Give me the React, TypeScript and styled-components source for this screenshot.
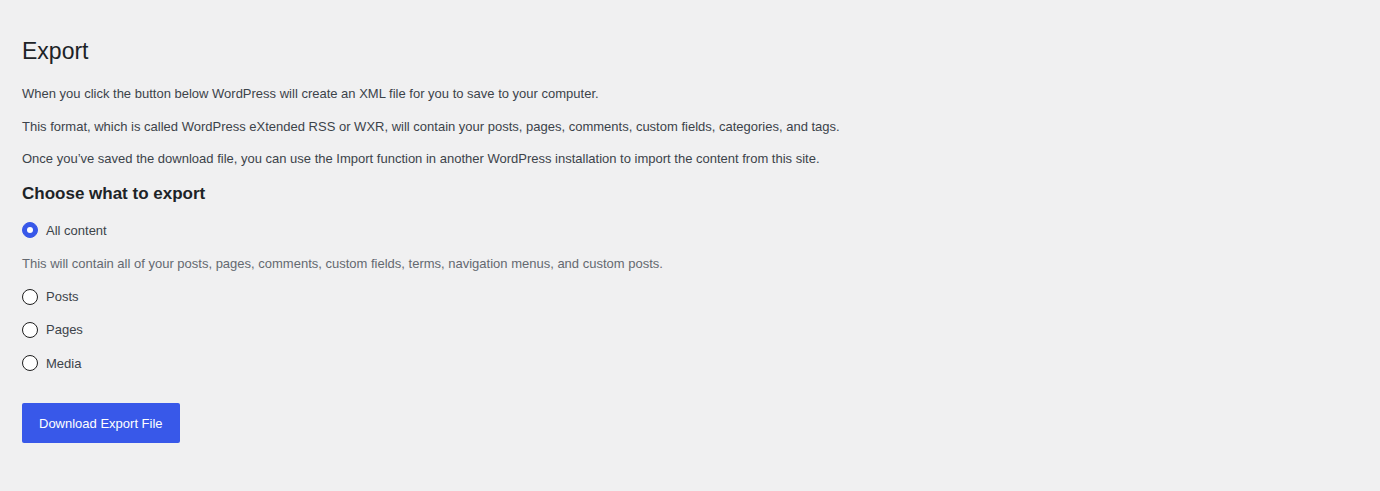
import React, {ReactElement, useState} from 'react'
import styled, {createGlobalStyle} from 'styled-components'

const GlobalStyle = createGlobalStyle`
    html, body {
        margin: 0;
        padding: 0;
        background: #f0f0f1;
    }

    body {
        font-family: 'Liberation Sans', Arial, sans-serif;
        font-size: 13px;
        line-height: 1.5;
        color: #3c434a;
    }
`

const Wrap = styled.div`
    padding: 36px 22px 40px;
    min-height: 100vh;
    box-sizing: border-box;
`

const Title = styled.h1`
    margin: 0 0 18px;
    font-size: 23px;
    font-weight: 400;
    line-height: 30px;
    color: #1d2327;
`

const Text = styled.p`
    margin: 0 0 13px;
    line-height: 19.5px;
`

const SubTitle = styled.h2`
    margin: 14px 0 16px;
    font-size: 17px;
    font-weight: 600;
    line-height: 22px;
    color: #1d2327;
`

const Options = styled.fieldset`
    border: 0;
    margin: 0;
    padding: 0;
    display: flex;
    flex-direction: column;
    gap: 13.75px;
`

const Option = styled.label`
    display: flex;
    align-items: center;
    gap: 8px;
    line-height: 19.5px;
    cursor: pointer;
`

const Radio = styled.input`
    appearance: none;
    margin: 0;
    width: 16px;
    height: 16px;
    border-radius: 50%;
    border: 1px solid #1e1e1e;
    background: #fff;
    box-sizing: border-box;
    display: grid;
    place-items: center;
    flex: none;

    &:checked {
        border-color: #3858e9;
        background: #3858e9;

        &::before {
            content: '';
            width: 6px;
            height: 6px;
            border-radius: 50%;
            background: #fff;
        }
    }
`

const Description = styled.p`
    margin: 0;
    line-height: 19.5px;
    color: #646970;
`

const Button = styled.button`
    margin-top: 30px;
    height: 40px;
    padding: 0 17px;
    border: 0;
    border-radius: 2px;
    background: #3858e9;
    color: #fff;
    font-family: inherit;
    font-size: 13px;
    cursor: pointer;
`

const choices = [
    {id: 'all', label: 'All content'},
    {id: 'posts', label: 'Posts'},
    {id: 'pages', label: 'Pages'},
    {id: 'attachment', label: 'Media'},
]

export default function App(): ReactElement {
    const [selected, setSelected] = useState('all')

    return (
        <Wrap>
            <GlobalStyle/>
            <Title>Export</Title>
            <Text>When you click the button below WordPress will create an XML file for you to save to your computer.</Text>
            <Text>This format, which is called WordPress eXtended RSS or WXR, will contain your posts, pages, comments, custom fields, categories, and tags.</Text>
            <Text>Once you’ve saved the download file, you can use the Import function in another WordPress installation to import the content from this site.</Text>

            <SubTitle>Choose what to export</SubTitle>
            <Options>
                {choices.map(choice => (
                    <React.Fragment key={choice.id}>
                        <Option>
                            <Radio
                                type="radio"
                                name="content"
                                checked={selected === choice.id}
                                onChange={() => setSelected(choice.id)}
                            />
                            {choice.label}
                        </Option>
                        {choice.id === 'all' && (
                            <Description>
                                This will contain all of your posts, pages, comments, custom fields, terms, navigation menus, and custom posts.
                            </Description>
                        )}
                    </React.Fragment>
                ))}
            </Options>
            <Button type="button">Download Export File</Button>
        </Wrap>
    )
}
